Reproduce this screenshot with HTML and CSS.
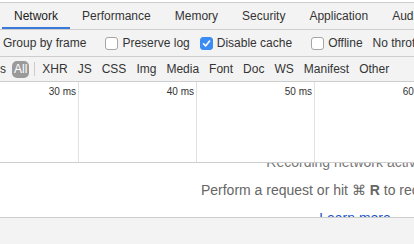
FILE: index.html
```html
<html>
  <head>
    <link rel="stylesheet" href="styles.css">
  </head>
  <body>
    <div class="tabs">
      <span class="tab selected">Network</span>
      <span class="tab">Performance</span>
      <span class="tab">Memory</span>
      <span class="tab">Security</span>
      <span class="tab">Application</span>
      <span class="tab">Audits</span>
    </div>
    <div class="toolbar">
      <span class="label first">Group by frame</span>
      <span class="sep"></span>
      <label class="check"><span class="box"></span>Preserve log</label>
      <label class="check"><span class="box on"><svg width="9" height="9" viewBox="0 0 9 9"><path d="M1.5 4.8 L3.6 6.9 L7.6 2" fill="none" stroke="#fff" stroke-width="1.6" stroke-linecap="round" stroke-linejoin="round"/></svg></span>Disable cache</label>
      <span class="sep"></span>
      <label class="check"><span class="box"></span>Offline</label>
      <span class="label">No throttling</span>
    </div>
    <div class="filters">
      <span class="clipped">s</span>
      <span class="filter active">All</span>
      <span class="sep"></span>
      <span class="filter">XHR</span>
      <span class="filter">JS</span>
      <span class="filter">CSS</span>
      <span class="filter">Img</span>
      <span class="filter">Media</span>
      <span class="filter">Font</span>
      <span class="filter">Doc</span>
      <span class="filter">WS</span>
      <span class="filter">Manifest</span>
      <span class="filter">Other</span>
    </div>
    <div class="overview">
      <div class="col first">30 ms</div>
      <div class="col">40 ms</div>
      <div class="col">50 ms</div>
      <div class="col">60 ms</div>
    </div>
    <div class="empty">
      <div class="message">
        <p>Recording network activity…</p>
        <p class="dark">Perform a request or hit ⌘ <b>R</b> to record the reload.</p>
        <p><a href="#">Learn more</a></p>
      </div>
    </div>
    <div class="status"></div>
  </body>
</html>
```

FILE: styles.css
```css
body {
  margin: 0;
  width: 414px;
  height: 244px;
  overflow: hidden;
  background: #fff;
  font-family: "Liberation Sans", Arial, sans-serif;
  font-size: 12px;
  color: #333;
}

.tabs,
.toolbar,
.filters {
  display: flex;
  align-items: center;
  white-space: nowrap;
  background: #f3f3f3;
  border-bottom: 1px solid #cdcdcd;
}

.tabs {
  margin-top: 2px;
  border-top: 1px solid #cdcdcd;
  height: 26px;
  padding-left: 2px;
  align-items: stretch;
}
.tab {
  display: flex;
  align-items: center;
  padding: 0 12px;
  border-bottom: 2px solid transparent;
  padding-top: 1px;
}
.tab.selected {
  border-bottom-color: #3879d9;
  color: #222;
}

.toolbar {
  height: 26px;
}
.label.first {
  padding-left: 3px;
  margin-right: 10px;
}
.sep {
  width: 1px;
  height: 18px;
  background: #ccc;
  margin: 0 9px 0 0;
}
.check {
  display: flex;
  align-items: center;
  margin-right: 10px;
}
.box {
  box-sizing: border-box;
  width: 13px;
  height: 13px;
  border: 1px solid #a6a6a6;
  border-radius: 3px;
  background: #fff;
  margin-right: 4px;
  display: flex;
  align-items: center;
  justify-content: center;
}
.box.on {
  background: #3b8df5;
  border-color: #3b8df5;
}

.filters {
  height: 24px;
}
.clipped {
  margin-right: 6px;
}
.filters .sep {
  height: 14px;
  margin: 0 5px 0 3px;
}
.filter {
  padding: 0 2px;
  margin-right: 6px;
  line-height: 17px;
}
.filter.active {
  background: #9a9a9a;
  color: #fff;
  border-radius: 5px;
  margin-right: 2px;
}

.overview {
  display: flex;
  height: 80px;
  border-bottom: 1px solid #cdcdcd;
}
.col {
  flex: none;
  box-sizing: border-box;
  width: 118px;
  border-right: 1px solid #e1e1e1;
  text-align: right;
  padding: 4px 2px 0 0;
  font-size: 10px;
  line-height: 12px;
  color: #333;
}
.col.first {
  width: 79px;
}

.empty {
  height: 54px;
  overflow: hidden;
  border-bottom: 1px solid #cdcdcd;
}
.message {
  width: 710px;
  margin-top: -11px;
  text-align: center;
  font-size: 14px;
  line-height: 20px;
  color: #777;
}
.message p {
  margin: 0 0 8px;
}
.message .dark {
  color: #666;
}
.message a {
  color: #1a55c8;
  text-decoration: none;
}

.status {
  height: 26px;
  background: #f3f3f3;
}
```
